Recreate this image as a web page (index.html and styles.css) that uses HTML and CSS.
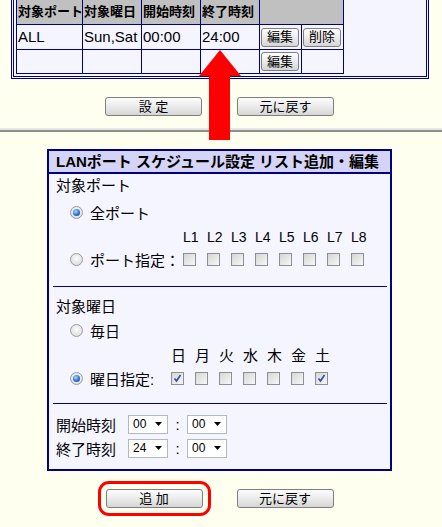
FILE: index.html
```html
<!DOCTYPE html>
<html lang="ja">
<head>
  <meta charset="UTF-8" />
  <title>LANポート スケジュール設定</title>
  <link rel="stylesheet" href="styles.css">
</head>
<body>
  <div class="list-box">
    <table class="list">
      <colgroup>
        <col class="c-port">
        <col class="c-day">
        <col class="c-time">
        <col class="c-time">
        <col class="c-btn">
        <col class="c-btn">
      </colgroup>
      <thead>
        <tr>
          <th>対象ポート</th>
          <th>対象曜日</th>
          <th>開始時刻</th>
          <th>終了時刻</th>
          <th colspan="2"></th>
        </tr>
      </thead>
      <tbody>
        <tr>
          <td>ALL</td>
          <td>Sun,Sat</td>
          <td>00:00</td>
          <td>24:00</td>
          <td><button class="btn btn-sm">編集</button></td>
          <td><button class="btn btn-sm">削除</button></td>
        </tr>
        <tr class="last">
          <td></td>
          <td></td>
          <td></td>
          <td></td>
          <td><button class="btn btn-sm">編集</button></td>
          <td></td>
        </tr>
      </tbody>
    </table>
  </div>

  <div class="btn-row">
    <button class="btn btn-lg">設 定</button>
    <button class="btn btn-lg">元に戻す</button>
  </div>

  <hr class="divider">

  <div class="form-box">
    <div class="form-title">LANポート スケジュール設定 リスト追加・編集</div>

    <div class="sec sec-port">
      <div class="sec-head">対象ポート</div>
      <div class="opt opt-top">
        <span class="radio on"></span><span>全ポート</span>
      </div>
      <div class="grid grid-port grid-labels">
        <span></span>
        <span>L1</span><span>L2</span><span>L3</span><span>L4</span>
        <span>L5</span><span>L6</span><span>L7</span><span>L8</span>
      </div>
      <div class="grid grid-port grid-row">
        <span class="opt"><span class="radio"></span><span>ポート指定：</span></span>
        <span class="chk"></span><span class="chk"></span><span class="chk"></span><span class="chk"></span>
        <span class="chk"></span><span class="chk"></span><span class="chk"></span><span class="chk"></span>
      </div>
    </div>

    <div class="sec sec-day">
      <div class="sec-head">対象曜日</div>
      <div class="opt opt-mid">
        <span class="radio"></span><span>毎日</span>
      </div>
      <div class="grid grid-day grid-labels grid-days">
        <span></span>
        <span>日</span><span>月</span><span>火</span><span>水</span>
        <span>木</span><span>金</span><span>土</span>
      </div>
      <div class="grid grid-day grid-row">
        <span class="opt"><span class="radio on"></span><span>曜日指定:</span></span>
        <span class="chk on"><svg width="11" height="11" viewBox="0 0 11 11"><path d="M2.5 5.5 L4.5 8 L8.5 2" fill="none" stroke="#3b55a6" stroke-width="1.8"/></svg></span>
        <span class="chk"></span><span class="chk"></span><span class="chk"></span>
        <span class="chk"></span><span class="chk"></span>
        <span class="chk on"><svg width="11" height="11" viewBox="0 0 11 11"><path d="M2.5 5.5 L4.5 8 L8.5 2" fill="none" stroke="#3b55a6" stroke-width="1.8"/></svg></span>
      </div>
    </div>

    <div class="sec sec-time">
      <div class="time-row">
        <span class="time-label">開始時刻</span>
        <span class="sel">00<svg width="7" height="4" viewBox="0 0 7 4"><path d="M0 0 H7 L3.5 4 Z"/></svg></span>
        <span class="colon">:</span>
        <span class="sel">00<svg width="7" height="4" viewBox="0 0 7 4"><path d="M0 0 H7 L3.5 4 Z"/></svg></span>
      </div>
      <div class="time-row">
        <span class="time-label">終了時刻</span>
        <span class="sel">24<svg width="7" height="4" viewBox="0 0 7 4"><path d="M0 0 H7 L3.5 4 Z"/></svg></span>
        <span class="colon">:</span>
        <span class="sel">00<svg width="7" height="4" viewBox="0 0 7 4"><path d="M0 0 H7 L3.5 4 Z"/></svg></span>
      </div>
    </div>
  </div>

  <div class="btn-row btn-row-bottom">
    <button class="btn btn-lg highlight">追 加</button>
    <button class="btn btn-lg">元に戻す</button>
  </div>

  <!-- 注釈の矢印 -->
  <svg class="arrow" width="42" height="90" viewBox="0 0 42 90">
    <polygon points="21,0 42,26 0,26" fill="#ff0000"/>
    <rect x="10" y="25" width="21" height="65" fill="#ff0000"/>
  </svg>
</body>
</html>
```

FILE: styles.css
```css
body {
  margin: 0;
  padding-bottom: 20px;
  display: flow-root;
  position: relative;
  background-color: #fffff0;
  font-family: "Liberation Sans", "Noto Sans CJK JP", sans-serif;
  color: #000;
}

/* 一覧 */
.list-box {
  margin: -6px 0 0 11px;
  width: 418px;
  box-sizing: border-box;
  border: 3px double #000080;
  padding: 2px;
  background-color: #f5f5ff;
}
.list {
  border-collapse: separate;
  border-spacing: 0;
  table-layout: fixed;
  width: 328px;
  border-left: 1px solid #000080;
  border-top: 1px solid #000080;
}
.c-port { width: 66px; }
.c-day, .c-time { width: 59px; }
.c-btn { width: 42px; }
.list th, .list td {
  box-sizing: border-box;
  border-right: 1px solid #000080;
  border-bottom: 1px solid #000080;
  padding: 0 0 0 1px;
  text-align: left;
  vertical-align: middle;
  white-space: nowrap;
  overflow: hidden;
}
.list th {
  height: 25px;
  background-color: #c0c0c0;
  font-size: 13px;
  font-weight: bold;
  line-height: 18px;
}
.list td {
  height: 25px;
  font-size: 15px;
  line-height: 18px;
}
.list tr.last td {
  height: 24px;
}

/* ボタン */
.btn {
  box-sizing: border-box;
  padding: 0;
  border: 1px solid #7f7f7f;
  border-radius: 3px;
  background: linear-gradient(#fdfdfd, #ededed 45%, #d6d6d6);
  font-family: "Liberation Sans", "Noto Sans CJK JP", sans-serif;
  font-size: 13px;
  line-height: 16px;
  color: #000;
  cursor: pointer;
}
.btn-sm {
  display: block;
  width: 38px;
  height: 19px;
}
.btn-lg {
  width: 97px;
  height: 19px;
}
.btn-row {
  display: flex;
  justify-content: center;
  gap: 35px;
  margin-top: 18px;
  padding-right: 3px;
}
.btn-row-bottom {
  gap: 34px;
}
.highlight {
  outline: 3px solid #ff0000;
  outline-offset: 5px;
}

.divider {
  margin: 12px 0 0;
  height: 0;
  border: 0;
  border-top: 2px solid #e6e6e6;
  border-bottom: 2px solid #8e8e8e;
}

/* 追加・編集フォーム */
.form-box {
  margin: 17px 0 0 47px;
  width: 345px;
  box-sizing: border-box;
  border: 2px solid #000080;
  background-color: #f5f5ff;
  font-size: 15px;
}
.form-title {
  height: 23px;
  box-sizing: border-box;
  border-bottom: 2px solid #000080;
  background-color: #d4d4f7;
  padding-left: 7px;
  font-weight: bold;
  line-height: 21px;
  white-space: nowrap;
}
.sec {
  margin: 0 3px 0 4px;
  padding-left: 3px;
  border-bottom: 1px solid #000080;
}
.sec-port { padding-bottom: 16px; }
.sec-day { padding-top: 8px; padding-bottom: 14px; }
.sec-time {
  border-bottom: 0;
  padding-top: 10px;
  padding-bottom: 11px;
}
.sec-head {
  height: 24px;
  line-height: 24px;
}
.opt {
  display: flex;
  align-items: center;
  gap: 7px;
}
.opt-top, .opt-mid {
  margin-left: 14px;
}
.opt-top { height: 28px; }
.opt-mid { height: 22px; }

.grid {
  display: grid;
  align-items: center;
  margin-left: 14px;
}
.grid-port { grid-template-columns: 113px repeat(8, 24px); }
.grid-day { grid-template-columns: 101px repeat(7, 24px); }
.grid-labels {
  height: 22px;
  font-size: 14px;
}
.grid-days {
  height: 26px;
  font-size: 15px;
}
.grid-row { height: 22px; }

.radio {
  position: relative;
  width: 13px;
  height: 13px;
  box-sizing: border-box;
  border: 1px solid #9c9c9c;
  border-radius: 50%;
  background: radial-gradient(circle at 50% 40%, #fdfdfd, #d4d4d4);
  flex: none;
}
.radio.on::after {
  content: "";
  position: absolute;
  left: 2px;
  top: 2px;
  width: 7px;
  height: 7px;
  border-radius: 50%;
  background: radial-gradient(circle at 40% 35%, #a8dcff, #2a74cc 55%, #0b3a86);
}
.chk {
  display: flex;
  align-items: center;
  justify-content: center;
  width: 13px;
  height: 13px;
  box-sizing: border-box;
  border: 1px solid #8e8f8f;
  background: linear-gradient(135deg, #d6d6d6, #f7f7f7);
}

.time-row {
  display: flex;
  align-items: center;
  height: 20px;
}
.time-row + .time-row {
  margin-top: 4px;
}
.time-label {
  width: 72px;
}
.sel {
  display: flex;
  align-items: center;
  justify-content: space-between;
  width: 40px;
  height: 19px;
  box-sizing: border-box;
  border: 1px solid #b4b9bf;
  background-color: #fff;
  padding: 0 5px 0 4px;
  font-size: 12px;
}
.colon {
  width: 19px;
  text-align: center;
}

.arrow {
  position: absolute;
  left: 199px;
  top: 50px;
}
```
